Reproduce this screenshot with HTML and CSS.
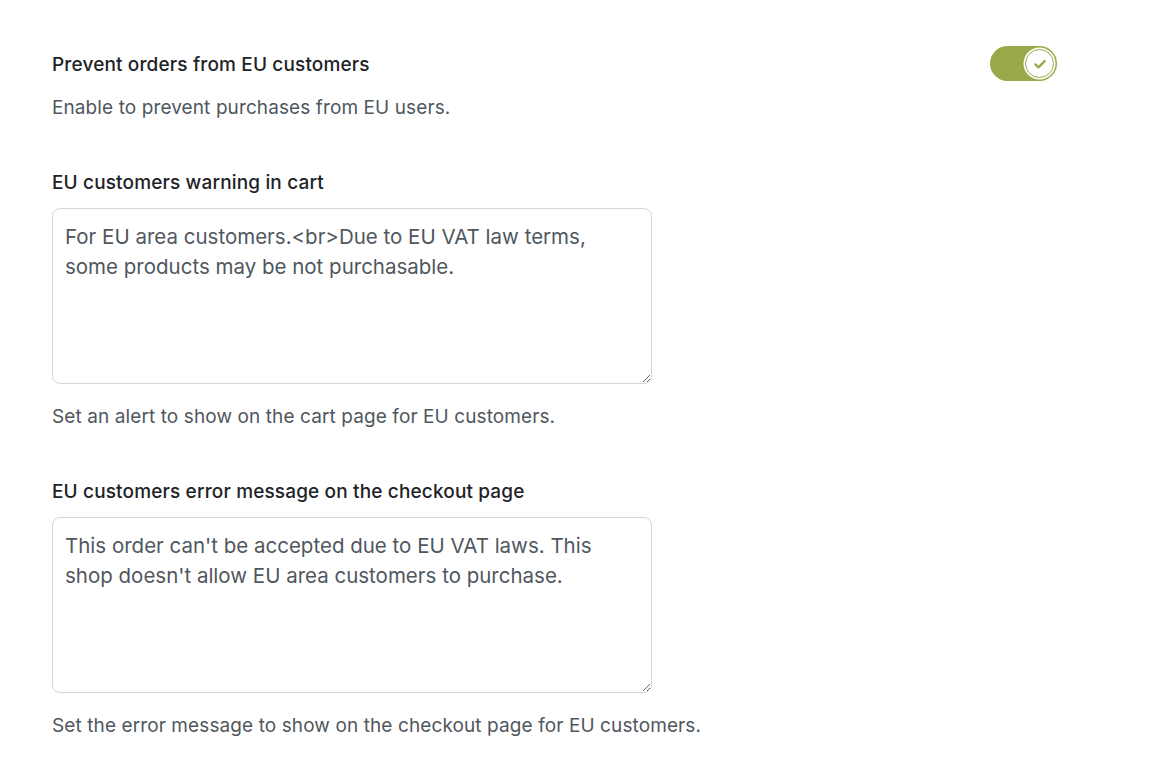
FILE: index.html
```html
<!DOCTYPE html>
<html lang="en">
<head>
  <meta charset="UTF-8">
  <title>EU VAT settings</title>
  <link rel="stylesheet" href="styles.css">
</head>
<body>
  <div class="settings">
    <div class="field field-toggle">
      <div class="field-text">
        <h3 class="label">Prevent orders from EU customers</h3>
        <p class="help">Enable to prevent purchases from EU users.</p>
      </div>
      <label class="toggle">
        <input type="checkbox" checked>
        <span class="track">
          <span class="knob">
            <svg width="16" height="16" viewBox="0 0 16 16"><path d="M3.4 8.4l3.1 2.9 6.1-6.2" fill="none" stroke="#9aa84a" stroke-width="2.4" stroke-linecap="round" stroke-linejoin="round"/></svg>
          </span>
        </span>
      </label>
    </div>

    <div class="field">
      <h3 class="label">EU customers warning in cart</h3>
      <textarea class="input">For EU area customers.&lt;br&gt;Due to EU VAT law terms, some products may be not purchasable.</textarea>
      <p class="help help-below">Set an alert to show on the cart page for EU customers.</p>
    </div>

    <div class="field">
      <h3 class="label">EU customers error message on the checkout page</h3>
      <textarea class="input">This order can't be accepted due to EU VAT laws. This shop doesn't allow EU area customers to purchase.</textarea>
      <p class="help help-below">Set the error message to show on the checkout page for EU customers.</p>
    </div>
  </div>
</body>
</html>
```

FILE: styles.css
```css
* {
  margin: 0;
  padding: 0;
  box-sizing: border-box;
}

body {
  background: #fff;
  font-family: Inter, "Noto Sans", sans-serif;
  color: #1e1e1e;
}

.settings {
  padding: 53px 113px 0 52px;
}

.field {
  margin-bottom: 51px;
}

.field-toggle {
  display: flex;
  justify-content: space-between;
  align-items: flex-start;
}

.label {
  font-size: 19px;
  line-height: 24px;
  font-weight: 500;
  letter-spacing: 0.15px;
  color: #1d2327;
  margin-bottom: 13px;
}

.field-toggle .label {
  margin-bottom: 19px;
}

.help {
  font-size: 19px;
  line-height: 24px;
  letter-spacing: 0.1px;
  color: #50575e;
}

.help-below {
  margin-top: 21px;
}

.input {
  display: block;
  width: 600px;
  height: 176px;
  padding: 13px 12px 11px;
  border: 1px solid #d3d7db;
  border-radius: 8px;
  font-family: inherit;
  font-size: 20.5px;
  line-height: 30px;
  color: #50575e;
  resize: vertical;
  outline: none;
}

/* Toggle */
.toggle {
  position: relative;
  display: block;
  margin-top: -7px;
  cursor: pointer;
}

.toggle input {
  display: none;
}

.track {
  display: flex;
  justify-content: flex-end;
  align-items: center;
  width: 67px;
  height: 35px;
  padding: 3px;
  border-radius: 18px;
  background: #9aa84a;
}

.knob {
  display: flex;
  justify-content: center;
  align-items: center;
  width: 29px;
  height: 29px;
  border-radius: 50%;
  background: #fff;
  border: 1.5px solid #9aa84a;
  box-shadow: 0 0 0 1.5px #fff;
}
```
